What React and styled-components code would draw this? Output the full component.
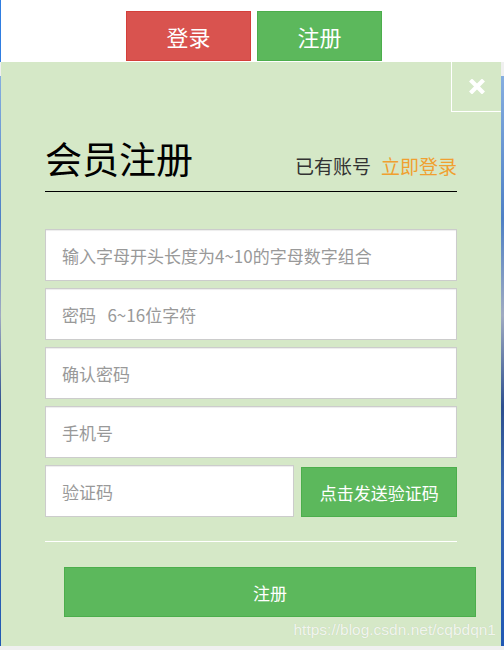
import React from "react";
import styled, { createGlobalStyle } from "styled-components";

const GlobalStyle = createGlobalStyle`
  body {
    margin: 0;
    background: #f0f0f0;
    font-family: "Noto Sans CJK SC", "Microsoft YaHei", sans-serif;
  }
  * { box-sizing: border-box; }
`;

const TopBar = styled.div`
  height: 62px;
  background: #fff;
  border-left: 1px solid #2f7de1;
  display: flex;
  justify-content: center;
  gap: 6px;
  padding: 11px 0 0 3px;
`;

const TabButton = styled.button`
  width: 125px;
  height: 50px;
  border: 1px solid ${p => (p.$variant === "danger" ? "#d43f3a" : "#4cae4c")};
  background: ${p => (p.$variant === "danger" ? "#d9534f" : "#5cb85c")};
  color: #fff;
  font-family: inherit;
  font-size: 22px;
  cursor: pointer;
  padding: 0;
`;

const Stage = styled.div`
  position: relative;
  height: 584px;

  &::before {
    content: "";
    position: absolute;
    top: 14px;
    left: 0;
    right: 0;
    bottom: 0;
    background: linear-gradient(
      180deg,
      #86aee0 0%,
      #4e80c6 25%,
      #a0abc2 42%,
      #2d4f8f 58%,
      #3b6ab2 72%,
      #2058b4 100%
    );
  }
`;

const Panel = styled.div`
  position: relative;
  width: 500px;
  height: 584px;
  margin-left: 1px;
  background: #d5e8c7;
  padding: 74px 44px 0;
`;

const CloseBox = styled.div`
  position: absolute;
  top: 0;
  right: 0;
  width: 50px;
  height: 50px;
  border-left: 1px solid #fff;
  border-bottom: 1px solid #fff;
  display: flex;
  align-items: center;
  justify-content: center;
  cursor: pointer;
`;

const Header = styled.div`
  display: flex;
  justify-content: space-between;
  align-items: baseline;
  padding-bottom: 11px;
  border-bottom: 1px solid #000;
`;

const Title = styled.h1`
  margin: 0;
  font-size: 37px;
  line-height: 44px;
  font-weight: normal;
  color: #000;
`;

const HaveAccount = styled.div`
  font-size: 19px;
  color: #333;
`;

const LoginLink = styled.a`
  color: #f0a030;
  margin-left: 10px;
  text-decoration: none;
  cursor: pointer;
`;

const Form = styled.form`
  margin-top: 37px;
  display: flex;
  flex-direction: column;
  gap: 7px;
`;

const Input = styled.input`
  width: ${p => p.$width || "100%"};
  height: 52px;
  border: 1px solid #ccc;
  box-shadow: inset 0 1px 1px rgba(0, 0, 0, 0.075);
  background: #fff;
  padding: 0 16px;
  font-family: inherit;
  font-size: 17px;
  color: #333;
  outline: none;

  &::placeholder {
    color: #999;
  }
`;

const CodeRow = styled.div`
  display: flex;
  align-items: flex-end;
  gap: 7px;
`;

const SendButton = styled.button`
  width: 156px;
  height: 50px;
  border: 1px solid #4cae4c;
  background: #5cb85c;
  color: #fff;
  font-family: inherit;
  font-size: 17px;
  padding: 0;
  cursor: pointer;
`;

const Divider = styled.div`
  height: 1px;
  background: #fff;
  margin-top: 24px;
`;

const SubmitButton = styled.button`
  display: block;
  width: 412px;
  height: 50px;
  margin: 25px 0 0 19px;
  border: 1px solid #4cae4c;
  background: #5cb85c;
  color: #fff;
  font-family: inherit;
  font-size: 17px;
  padding: 0;
  cursor: pointer;
`;

const Watermark = styled.div`
  position: absolute;
  right: 5px;
  bottom: 6px;
  line-height: 20px;
  font-family: "Liberation Sans", Arial, sans-serif;
  font-size: 15.5px;
  color: rgba(255, 255, 255, 0.8);
  text-shadow: 0 0 1px rgba(0, 0, 0, 0.12);
  pointer-events: none;
`;

const CloseIcon = () => (
  <svg width="16" height="15" viewBox="0 0 16 15">
    <path
      d="M3 2.5 L13 12.5 M13 2.5 L3 12.5"
      stroke="#fff"
      strokeWidth="4.2"
      strokeLinecap="square"
    />
  </svg>
);

export default function App() {
  return (
    <>
      <GlobalStyle />
      <TopBar>
        <TabButton $variant="danger">登录</TabButton>
        <TabButton $variant="success">注册</TabButton>
      </TopBar>
      <Stage>
        <Panel>
          <CloseBox>
            <CloseIcon />
          </CloseBox>
          <Header>
            <Title>会员注册</Title>
            <HaveAccount>
              已有账号<LoginLink>立即登录</LoginLink>
            </HaveAccount>
          </Header>
          <Form onSubmit={e => e.preventDefault()}>
            <Input placeholder="输入字母开头长度为4~10的字母数字组合" />
            <Input type="password" placeholder="密码   6~16位字符" />
            <Input type="password" placeholder="确认密码" />
            <Input placeholder="手机号" />
            <CodeRow>
              <Input $width="250px" placeholder="验证码" />
              <SendButton type="button">点击发送验证码</SendButton>
            </CodeRow>
          </Form>
          <Divider />
          <SubmitButton type="button">注册</SubmitButton>
          <Watermark>https://blog.csdn.net/cqbdqn1</Watermark>
        </Panel>
      </Stage>
    </>
  );
}
